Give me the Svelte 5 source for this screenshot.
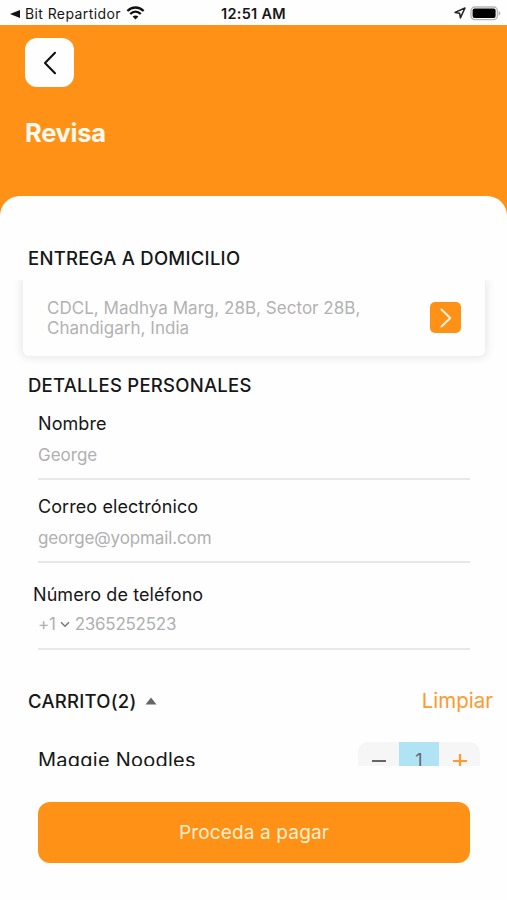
<script>
    let fields = [
        { label: 'Nombre', value: 'George', name: 'name' },
        { label: 'Correo electrónico', value: 'george@yopmail.com', name: 'mail' }
    ];
    let phone = { code: '+1', number: '2365252523' };
    let items = [{ id: 1, name: 'Maggie Noodles' }, { id: 2, name: 'Pasta' }];
    let quantity = 1;

    function remove() {
        if (quantity > 1) quantity -= 1;
    }
    function add() {
        quantity += 1;
    }
</script>

<div class="screen">
    <div class="status">
        <div class="app-name">
            <svg width="11" height="10" viewBox="0 0 11 10"><path d="M0 5 L10 0.9 V9.1 Z" /></svg>
            <span class="origin">Bit Repartidor</span>
            <svg class="wifi" width="19" height="14" viewBox="0 0 19 14">
                <path d="M1.4 5 C6 0.4 13 0.4 17.6 5" />
                <path d="M4.2 8 C7.3 5 11.7 5 14.8 8" />
                <path class="dot" d="M6.6 10.5 C8.3 9 10.7 9 12.4 10.5 L9.5 13.5 Z" />
            </svg>
        </div>
        <span class="clock">12:51 AM</span>
        <div class="battery">
            <svg width="12" height="12" viewBox="0 0 12 12"><path d="M1 5.4 L11 1 L6.4 10.9 L5.6 6.2 Z" /></svg>
            <svg width="31" height="15" viewBox="0 0 31 15">
                <rect class="shell" x="1" y="1" width="26.4" height="12.6" rx="3.8" />
                <rect class="charge" x="2.6" y="2.6" width="23" height="9.4" rx="2" />
                <path class="cap" d="M28.6 5 C31 6 31 8.6 28.6 9.6 Z" />
            </svg>
        </div>
    </div>

    <header>
        <button class="back" aria-label="Volver">
            <svg width="14" height="24" viewBox="0 0 14 24"><path d="M12 1.8 L2 12 L12 22.2" /></svg>
        </button>
        <h1>Revisa</h1>
    </header>

    <main>
        <div class="content">
            <h2 class="delivery">ENTREGA A DOMICILIO</h2>
            <div class="address-wrap">
                <div class="address">
                    <p>CDCL, Madhya Marg, 28B, Sector 28B,<br />Chandigarh, India</p>
                    <button class="go" aria-label="Cambiar">
                        <svg width="12" height="20" viewBox="0 0 12 20"><path d="M1.5 1.5 L10.3 10 L1.5 18.5" /></svg>
                    </button>
                </div>
            </div>

            <h2 class="details">DETALLES PERSONALES</h2>
            {#each fields as field (field.label)}
                <div class="field {field.name}">
                    <span class="label">{field.label}</span>
                    <span class="value">{field.value}</span>
                </div>
            {/each}
            <div class="field phone">
                <span class="label">Número de teléfono</span>
                <div class="value">
                    <span class="code">{phone.code}</span>
                    <svg width="10" height="7" viewBox="0 0 10 7"><path d="M1 1.2 L5 5.2 L9 1.2" /></svg>
                    <span class="number">{phone.number}</span>
                </div>
            </div>

            <div class="cart">
                <h2>CARRITO({items.length})</h2>
                <svg width="12" height="8" viewBox="0 0 12 8"><path d="M6 0.5 L11.5 7.5 H0.5 Z" /></svg>
                <button class="clear">Limpiar</button>
            </div>
            <div class="item">
                <span class="item-name">{items[0].name}</span>
                <div class="stepper">
                    <button on:click={remove} aria-label="Quitar">
                        <svg width="16" height="16" viewBox="0 0 16 16"><path d="M1 8 H15" /></svg>
                    </button>
                    <span class="count">{quantity}</span>
                    <button class="plus" on:click={add} aria-label="Agregar">
                        <svg width="16" height="16" viewBox="0 0 16 16"><path d="M1 8 H15 M8 1 V15" /></svg>
                    </button>
                </div>
            </div>
        </div>
        <button class="pay">Proceda a pagar</button>
    </main>
</div>

<style>
    :global(body) {
        margin: 0;
        background: #fefefe;
    }
    .screen {
        width: 507px;
        height: 900px;
        overflow: hidden;
        background: #ff9216;
        font-family: Inter, 'Liberation Sans', sans-serif;
        color: #171717;
        display: flex;
        flex-direction: column;
    }
    button {
        border: 0;
        padding: 0;
        background: none;
        font-family: inherit;
        display: flex;
        align-items: center;
        justify-content: center;
    }
    h1, h2, p {
        margin: 0;
    }
    svg {
        display: block;
        flex: none;
        fill: none;
    }

    .status {
        box-sizing: border-box;
        height: 25px;
        padding: 2px 6px 0 10px;
        background: #fefefe;
        display: grid;
        grid-template-columns: 1fr auto 1fr;
        align-items: center;
        font-size: 14px;
        line-height: 22px;
        white-space: nowrap;
    }
    .app-name, .battery {
        display: flex;
        align-items: center;
    }
    .app-name path {
        fill: #111;
    }
    .origin {
        margin: 0 5px 0 4px;
        letter-spacing: 0.4px;
    }
    .wifi {
        margin-top: -2px;
    }
    .wifi path {
        fill: none;
        stroke: #111;
        stroke-width: 2.4;
    }
    .wifi .dot {
        fill: #111;
        stroke: none;
    }
    .clock {
        font-size: 14.5px;
        font-weight: 600;
        letter-spacing: 0.3px;
        margin-left: -4px;
    }
    .battery {
        justify-content: flex-end;
        gap: 4px;
        margin-top: -1px;
    }
    .battery path {
        stroke: #222;
        stroke-width: 1.5;
        stroke-linejoin: round;
    }
    .battery .shell {
        stroke: #b5b5b5;
        stroke-width: 1.3;
    }
    .battery .charge {
        fill: #000;
    }
    .battery .cap {
        fill: #b5b5b5;
        stroke: none;
    }

    header {
        height: 171px;
        flex: none;
        box-sizing: border-box;
        padding: 13px 25px 0;
    }
    .back {
        width: 49px;
        height: 49px;
        border-radius: 12px;
        background: #fefefe;
    }
    .back path {
        stroke: #111;
        stroke-width: 2.1;
        stroke-linecap: round;
        stroke-linejoin: round;
    }
    h1 {
        margin-top: 30px;
        font-size: 25.5px;
        line-height: 32px;
        font-weight: 700;
        letter-spacing: -0.3px;
        color: #fffaf0;
    }

    main {
        flex: 1;
        background: #fefefe;
        border-radius: 20px 20px 0 0;
    }
    .content {
        height: 570px;
        overflow: hidden;
    }
    h2 {
        font-size: 18.5px;
        line-height: 24px;
        font-weight: 500;
        letter-spacing: 0.25px;
        white-space: nowrap;
    }
    .delivery {
        padding: 50px 0 0 28px;
    }
    .address-wrap {
        margin-top: 10px;
        height: 84px;
        padding: 0 14px 0 15px;
        overflow: hidden;
    }
    .address {
        box-sizing: border-box;
        height: 76px;
        margin: 0 8px;
        padding: 0 24px 0 24px;
        border-radius: 0 0 6px 6px;
        background: #fefefe;
        box-shadow: 0 0 8px 2px rgba(0, 0, 0, 0.09);
        display: flex;
        align-items: center;
        justify-content: space-between;
    }
    .address p {
        color: #b2b2b2;
        font-size: 17px;
        line-height: 20px;
        letter-spacing: 0.03px;
        white-space: nowrap;
    }
    .go {
        width: 31px;
        height: 31px;
        margin-top: -1px;
        border-radius: 5px;
        background: #ff9216;
    }
    .go path {
        stroke: #fff3dc;
        stroke-width: 2;
        stroke-linecap: round;
        stroke-linejoin: round;
    }
    .details {
        padding: 9px 0 0 28px;
    }
    .field {
        box-sizing: border-box;
        height: 83px;
        margin: 0 37px 0 38px;
        padding-top: 15px;
        border-bottom: 2px solid #e8e8e8;
        display: flex;
        flex-direction: column;
        gap: 7px;
    }
    .label {
        font-size: 18px;
        line-height: 24px;
        letter-spacing: 0.08px;
    }
    .value {
        color: #b0b0b0;
        font-size: 17px;
        line-height: 24px;
    }
    .mail .value {
        letter-spacing: -0.12px;
    }
    .phone {
        height: 87px;
        padding-top: 20px;
        gap: 5px;
    }
    .phone .label {
        margin-left: -5px;
    }
    .phone .value {
        display: flex;
        align-items: center;
        letter-spacing: -0.25px;
    }
    .phone svg {
        margin: 0 5px 0 4px;
    }
    .phone path {
        stroke: #777;
        stroke-width: 1.5;
    }
    .name {
        height: 83px;
        padding-top: 15px;
    }
    .cart {
        padding: 39px 14px 0 28px;
        display: flex;
        align-items: center;
    }
    .cart svg {
        margin-left: 8px;
    }
    .cart path {
        fill: #666;
    }
    .clear {
        margin-left: auto;
        color: #ff9a2c;
        font-size: 20.5px;
        line-height: 24px;
    }
    .item {
        margin: 29px 27px 0 38px;
        display: flex;
        justify-content: space-between;
        align-items: center;
    }
    .item-name {
        font-size: 20px;
        line-height: 24px;
        letter-spacing: 0.25px;
    }
    .stepper {
        width: 122px;
        height: 36px;
        border-radius: 10px;
        overflow: hidden;
        background: #f6f6f6;
        display: grid;
        grid-template-columns: 41px 40px 41px;
    }
    .stepper path {
        stroke: #666;
        stroke-width: 2.2;
    }
    .stepper .plus path {
        stroke: #ff9a2c;
    }
    .count {
        background: #b0e3f3;
        color: #667;
        font-size: 18px;
        line-height: 37px;
        text-align: center;
    }
    .pay {
        width: 432px;
        height: 61px;
        margin: 36px 0 0 38px;
        border-radius: 12px;
        background: #ff9216;
        color: #fff0d2;
        font-size: 19px;
        letter-spacing: 0.15px;
    }
</style>
